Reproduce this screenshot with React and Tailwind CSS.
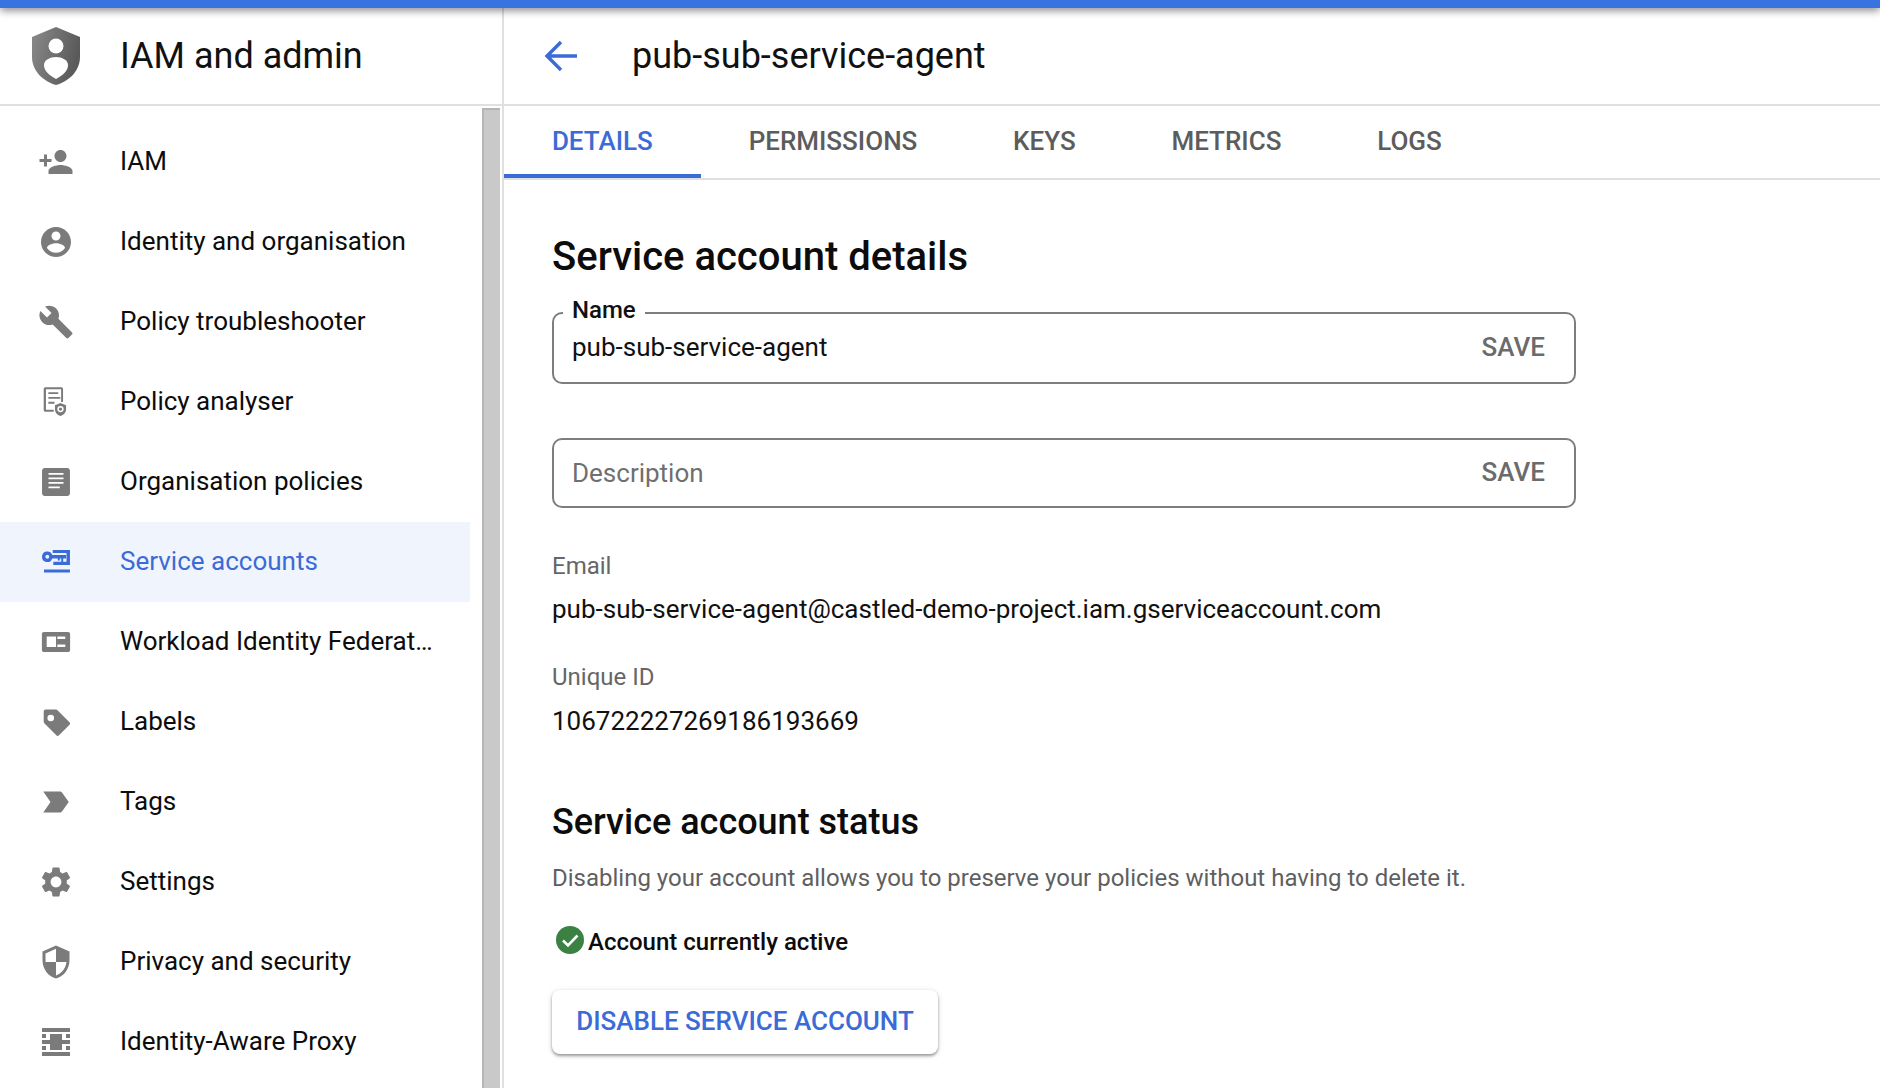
import { Fragment } from 'react'

// material paths on a 24 box, drawn at 36px like the console's nav icons
const navItems = [
  { label: 'IAM', icon: <path d="M15 12c2.21 0 4-1.79 4-4s-1.79-4-4-4-4 1.79-4 4 1.79 4 4 4zm-9-2V7H4v3H1v2h3v3h2v-3h3v-2H6zm9 4c-2.67 0-8 1.34-8 4v2h16v-2c0-2.66-5.33-4-8-4z" /> },
  { label: 'Identity and organisation', icon: <path d="M12 2C6.48 2 2 6.48 2 12s4.48 10 10 10 10-4.48 10-10S17.52 2 12 2zm0 3c1.66 0 3 1.34 3 3s-1.34 3-3 3-3-1.34-3-3 1.34-3 3-3zm0 14.2c-2.5 0-4.71-1.28-6-3.22.03-1.99 4-3.08 6-3.08 1.99 0 5.97 1.09 6 3.08-1.29 1.94-3.5 3.22-6 3.22z" /> },
  { label: 'Policy troubleshooter', icon: <path d="M22.7 19l-9.1-9.1c.9-2.3.4-5-1.5-6.9-2-2-5-2.4-7.4-1.3L9 6 6 9 1.6 4.7C.4 7.1.9 10.1 2.9 12.1c1.9 1.9 4.6 2.4 6.9 1.5l9.1 9.1c.4.4 1 .4 1.4 0l2.3-2.3c.5-.4.5-1.1.1-1.4z" /> },
  {
    label: 'Policy analyser',
    icon: (
      <Fragment>
        <path d="M5 2.2h10.5c.7 0 1.2.5 1.2 1.2v8.6h-1.3V3.5H5.3v13.7h5.2v1.3H5c-.7 0-1.2-.5-1.2-1.2V3.4c0-.7.5-1.2 1.2-1.2z" />
        <path d="M6.9 5.5h6.6v1.2H6.9zM6.9 8.7h8v1.2h-8zM6.9 11.900h4.100v1.200H6.900z" />
        <path fillRule="evenodd" d="M15 12.700l3.700 1.500v2.600c0 2.100-1.500 3.900-3.700 4.500-2.200-.6-3.700-2.400-3.700-4.500v-2.600zm0 1.900a2.100 2.100 0 1 0 0 4.200 2.100 2.100 0 0 0 0-4.200zm0 1a1.100 1.100 0 1 1 0 2.200 1.100 1.100 0 0 1 0-2.200z" />
      </Fragment>
    ),
  },
  {
    label: 'Organisation policies',
    icon: <path fillRule="evenodd" d="M4.500 2.700h15c1 0 1.800.8 1.800 1.800v15c0 1-.8 1.800-1.800 1.800h-15c-1 0-1.800-.8-1.800-1.800v-15c0-1 .8-1.800 1.800-1.800zM7 6v1.100h10V6zm0 3v1.100h10V9zm0 3v1.100h10V12zm0 3v1.100h7.500V15z" />,
  },
  {
    label: 'Service accounts',
    active: true,
    icon: (
      <Fragment>
        <path fillRule="evenodd" d="M6.200 5a3.500 3.500 0 0 1 3.300 2.300h9.200v2.300h-1.900V12h-1.300V9.600h-1v1.400h-1.300V9.600H9.500A3.500 3.500 0 1 1 6.200 5zm0 2.200a1.300 1.300 0 1 0 0 2.600 1.300 1.300 0 0 0 0-2.600z" />
        <path d="M9.800 4h11.500v10H10.200v-2.200H19V6H9.800zM4 17h17.300v2H4z" />
      </Fragment>
    ),
  },
  {
    label: 'Workload Identity Federat…',
    icon: <path fillRule="evenodd" d="M4 5.300h16c.8 0 1.400.6 1.400 1.400v10.600c0 .8-.6 1.400-1.400 1.400H4c-.8 0-1.400-.6-1.400-1.400V6.700c0-.8.6-1.400 1.400-1.400zm1.800 3.100v6.900H12V8.400zm7.100 0V10h5.300V8.400zm0 5.200v1.700h5.300v-1.700z" />,
  },
  {
    label: 'Labels',
    icon: <path fillRule="evenodd" d="M5 3.700h7c.4 0 .7.1 1 .4l8 8c.5.5.5 1.300 0 1.800l-7 7c-.5.5-1.300.5-1.800 0l-8-8c-.3-.3-.4-.6-.4-1V5c0-.7.6-1.300 1.200-1.300zm3.500 3.400a2.200 2.200 0 1 0 0 4.400 2.200 2.200 0 0 0 0-4.400z" />,
  },
  { label: 'Tags', icon: <path d="M3.5 18.99l11 .01c.67 0 1.27-.33 1.63-.84L20.5 12l-4.37-6.16c-.36-.51-.96-.84-1.63-.84l-11 .01L8.34 12 3.5 18.99z" /> },
  { label: 'Settings', icon: <path d="M19.14 12.94c.04-.3.06-.61.06-.94 0-.32-.02-.64-.07-.94l2.03-1.58c.18-.14.23-.41.12-.61l-1.92-3.32c-.12-.22-.37-.29-.59-.22l-2.39.96c-.5-.38-1.03-.7-1.62-.94l-.36-2.54c-.04-.24-.24-.41-.48-.41h-3.84c-.24 0-.43.17-.47.41l-.36 2.54c-.59.24-1.13.57-1.62.94l-2.39-.96c-.22-.08-.47 0-.59.22L2.74 8.87c-.12.21-.08.47.12.61l2.03 1.58c-.05.3-.09.63-.09.94s.02.64.07.94l-2.03 1.58c-.18.14-.23.41-.12.61l1.92 3.32c.12.22.37.29.59.22l2.39-.96c.5.38 1.03.7 1.62.94l.36 2.54c.05.24.24.41.48.41h3.84c.24 0 .44-.17.47-.41l.36-2.54c.59-.24 1.13-.56 1.62-.94l2.39.96c.22.08.47 0 .59-.22l1.92-3.32c.12-.22.07-.47-.12-.61l-2.01-1.58zM12 15.6c-1.98 0-3.6-1.62-3.6-3.6s1.62-3.6 3.6-3.6 3.6 1.62 3.6 3.6-1.62 3.6-3.6 3.6z" /> },
  { label: 'Privacy and security', icon: <path d="M12 1L3 5v6c0 5.55 3.84 10.74 9 12 5.16-1.26 9-6.45 9-12V5l-9-4zm0 10.99h7c-.53 4.12-3.28 7.79-7 8.94V12H5V6.3l7-3.11v8.8z" /> },
  {
    label: 'Identity-Aware Proxy',
    icon: <path d="M2.670 2.670h18.660v2.660H2.670zM2.670 18.670h18.660v2.660H2.670zM8 6.670h8v4h5.330v2.660H16v4H8v-4H2.670v-2.660H8zM2.670 6.670h2.660v2.660H2.670zM18.670 6.670h2.660v2.660h-2.660zM2.670 14.670h2.660v2.660H2.670zM18.670 14.670h2.660v2.660h-2.660z" />,
  },
]

const tabs = ['DETAILS', 'PERMISSIONS', 'KEYS', 'METRICS', 'LOGS']

function NavIcon({ children, active }) {
  return (
    <svg viewBox="0 0 24 24" className={`w-9 h-9 shrink-0 ${active ? 'fill-[#3b6bd6]' : 'fill-[#7b7b7b]'}`}>
      {children}
    </svg>
  )
}

function NavRow({ item }) {
  return (
    <div className={`h-20 flex items-center pl-[38px] ${item.active ? 'bg-[#f0f4fd] text-[#3b6bd6]' : 'text-[#0c0c0c]'}`}>
      <NavIcon active={item.active}>{item.icon}</NavIcon>
      <span className="ml-[46px] mb-[2px] text-[26px] whitespace-nowrap">{item.label}</span>
    </div>
  )
}

function ShieldLogo() {
  return (
    <svg viewBox="0 0 48 58" className="w-12 h-[58px] shrink-0">
      <defs>
        <linearGradient id="shield" x1="0" y1="0" x2="1" y2="0.3">
          <stop offset="0" stopColor="#8a8a8a" />
          <stop offset="1" stopColor="#5a5a5a" />
        </linearGradient>
      </defs>
      <path d="M24 0L0 10v20c0 13 10 24 24 28 14-4 24-15 24-28V10z" fill="url(#shield)" />
      <circle cx="24" cy="19" r="7.5" fill="#fff" />
      <path d="M24 30c-6 0-12 3-12 8 0 6 5 10 12 14 7-4 12-8 12-14 0-5-6-8-12-8z" fill="#fff" />
    </svg>
  )
}

function Field({ label, value, placeholder, tall }) {
  return (
    <div className={`relative w-[1024px] border-2 border-[#7e7e7e] rounded-[10px] flex items-center justify-between pl-[18px] pr-[29px] ${tall ? 'h-[72px]' : 'h-[70px]'}`}>
      {label && (
        <span className="absolute left-[9px] top-[-22px] bg-white px-[9px] text-[24px] font-medium text-[#111]">{label}</span>
      )}
      <span className={`text-[26px] ${value ? 'mb-[2px] text-[#111]' : 'text-[#6f6f6f]'}`}>{value || placeholder}</span>
      <span className="mb-[2px] text-[26px] font-medium text-[#6b6b6b]">SAVE</span>
    </div>
  )
}

export default function App() {
  return (
    <div className="h-screen overflow-hidden bg-white flex flex-col font-['Roboto',sans-serif]">
      <div className="relative z-10 h-2 shrink-0 bg-[#3873e0] shadow-[0_2px_8px_rgba(0,0,0,0.55)]" />
      <div className="flex flex-1 min-h-0">
        <aside className="w-[504px] shrink-0 border-r-2 border-[#e0e0e0] flex flex-col">
          <div className="h-[98px] shrink-0 border-b-2 border-[#e0e0e0] flex items-center pl-8">
            <ShieldLogo />
            <span className="ml-10 text-[36px] text-[#111]">IAM and admin</span>
          </div>
          <div className="flex flex-1 min-h-0 overflow-hidden">
            <nav className="w-[470px] shrink-0 pt-4">
              {navItems.map((item) => (
                <NavRow key={item.label} item={item} />
              ))}
            </nav>
            <div className="ml-3 mt-[2px] w-[18px] bg-[#c9c9c9] border-l-2 border-t-2 border-[#b5b5b5]" />
          </div>
        </aside>

        <main className="flex-1 min-w-0 flex flex-col">
          <div className="h-[98px] shrink-0 border-b-2 border-[#e0e0e0] flex items-center pl-[39px]">
            <svg viewBox="0 0 36 36" className="w-9 h-9 fill-none stroke-[#3b6bd6] stroke-[3.4]">
              <path d="M34 18H5M18 4L4 18l14 14" />
            </svg>
            <span className="ml-[53px] text-[36px] text-[#111]">pub-sub-service-agent</span>
          </div>

          <div className="h-[74px] shrink-0 border-b-2 border-[#e0e0e0] flex">
            {tabs.map((t, i) => (
              <div
                key={t}
                className={`h-[72px] px-[47.9px] pt-[2px] flex items-center text-[26px] font-medium border-b-4 ${
                  i === 0 ? 'text-[#3b6bd6] border-[#3b6bd6]' : 'text-[#5c5c5c] border-transparent'
                }`}
              >
                {t}
              </div>
            ))}
          </div>

          <div className="pl-12 flex flex-col items-start">
            <h1 className="mt-[53px] text-[40px] leading-[48px] font-medium text-[#0c0c0c]">Service account details</h1>
            <div className="mt-[31px]">
              <Field label="Name" value="pub-sub-service-agent" tall />
            </div>
            <div className="mt-[54px]">
              <Field placeholder="Description" />
            </div>
            <div className="mt-[42px] text-[24px] leading-8 text-[#666]">Email</div>
            <div className="mt-[11px] text-[26px] leading-8 text-[#111]">pub-sub-service-agent@castled-demo-project.iam.gserviceaccount.com</div>
            <div className="mt-9 text-[24px] leading-8 text-[#666]">Unique ID</div>
            <div className="mt-3 text-[26px] leading-8 text-[#111]">106722227269186193669</div>
            <h2 className="mt-[63px] text-[36px] leading-[44px] font-medium text-[#0c0c0c]">Service account status</h2>
            <p className="mt-[18px] text-[24px] leading-8 text-[#5f5f5f]">Disabling your account allows you to preserve your policies without having to delete it.</p>
            <div className="mt-[30px] flex items-center ml-1">
              <svg viewBox="0 0 28 28" className="w-7 h-7 shrink-0 mb-1">
                <circle cx="14" cy="14" r="14" fill="#3a8143" />
                <path d="M7 14.5l5 5 9.5-10" fill="none" stroke="#fff" strokeWidth="2.6" />
              </svg>
              <span className="ml-1 text-[24px] font-medium text-[#0c0c0c]">Account currently active</span>
            </div>
            <button
              type="button"
              className="mt-[30px] w-[386px] h-16 pb-[2px] rounded-lg bg-white text-[26px] font-medium text-[#3b6bd6] shadow-[0_2px_3px_rgba(0,0,0,0.35),0_1px_6px_rgba(0,0,0,0.12)]"
            >
              DISABLE SERVICE ACCOUNT
            </button>
          </div>
        </main>
      </div>
    </div>
  )
}
